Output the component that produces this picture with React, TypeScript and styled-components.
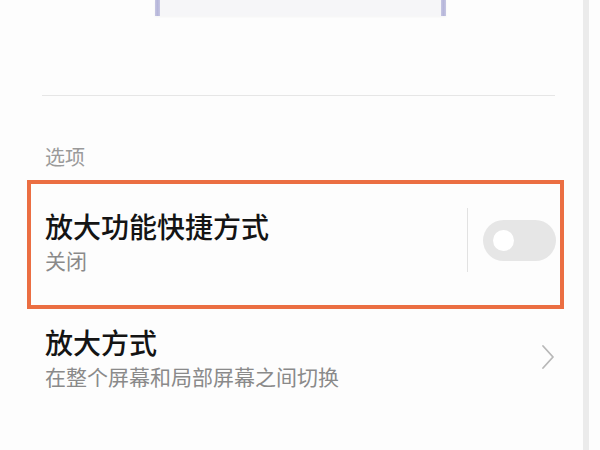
import React from 'react';
import styled, { createGlobalStyle } from 'styled-components';

const GlobalStyle = createGlobalStyle`
  html, body {
    margin: 0;
    padding: 0;
    background: #fdfdfd;
    font-family: "Noto Sans CJK SC", "Noto Sans", sans-serif;
  }
`;

const Screen = styled.div`
  width: 600px;
  height: 450px;
  display: flex;
  overflow: hidden;
  background: #fdfdfd;
`;

const Content = styled.div`
  width: 583px;
  display: flex;
  flex-direction: column;
`;

const ScrollTrack = styled.div`
  width: 6px;
  height: 100%;
  background: #ebebeb;
`;

const Preview = styled.div`
  margin-left: 155px;
  width: 291px;
  height: 16px;
  display: flex;
  background: #f6f6f8;
  box-shadow: 0 1px 2px rgba(0, 0, 0, 0.04);
`;

const PreviewEdge = styled.div`
  width: 5px;
  height: 100%;
  background: linear-gradient(90deg, #c6c6e2, #b6b6da, #c6c6e2);
`;

const PreviewFill = styled.div`
  flex: 1;
`;

const Divider = styled.div`
  margin: 79px 0 0 42px;
  width: 513px;
  height: 1px;
  background: #e6e6e6;
`;

const SectionLabel = styled.div`
  margin: 51px 0 0 45px;
  font-size: 20px;
  line-height: 20px;
  color: #9a9a9a;
`;

const Row = styled.div<{ $highlight?: boolean }>`
  display: flex;
  align-items: flex-start;
  box-sizing: border-box;
  margin-left: 27px;
  width: 537px;
  border: 4px solid ${(p) => (p.$highlight ? '#eb6e42' : 'transparent')};
  padding: ${(p) => (p.$highlight ? '28px 4px 0 14px' : '15px 0 0 14px')};
  height: ${(p) => (p.$highlight ? '129px' : '110px')};
`;

const FirstRow = styled(Row)`
  margin-top: 13px;
`;

const TextBlock = styled.div`
  flex: 1;
  display: flex;
  flex-direction: column;
`;

const Title = styled.div`
  font-size: 28px;
  line-height: 28px;
  font-weight: 500;
  color: #141414;
`;

const Subtitle = styled.div`
  margin-top: 9px;
  font-size: 21px;
  line-height: 22px;
  color: #8a8a8a;
`;

const SwitchArea = styled.div`
  margin-top: -4px;
  display: flex;
  align-items: center;
  height: 64px;
`;

const SwitchDivider = styled.div`
  width: 1px;
  height: 64px;
  background: #e2e2e2;
  margin-right: 15px;
`;

const Toggle = styled.div`
  position: relative;
  width: 73px;
  height: 41px;
  border-radius: 21px;
  background: #e6e6e6;
`;

const Knob = styled.div`
  position: absolute;
  left: 10px;
  top: 10px;
  width: 21px;
  height: 21px;
  border-radius: 50%;
  background: #ffffff;
`;

const Chevron = styled.svg`
  margin: 16px 5px 0 0;
  width: 14px;
  height: 26px;
`;

export default function App() {
  return (
    <>
      <GlobalStyle />
      <Screen>
        <Content>
          <Preview>
            <PreviewEdge />
            <PreviewFill />
            <PreviewEdge />
          </Preview>
          <Divider />
          <SectionLabel>选项</SectionLabel>
          <FirstRow $highlight>
            <TextBlock>
              <Title>放大功能快捷方式</Title>
              <Subtitle>关闭</Subtitle>
            </TextBlock>
            <SwitchArea>
              <SwitchDivider />
              <Toggle>
                <Knob />
              </Toggle>
            </SwitchArea>
          </FirstRow>
          <Row>
            <TextBlock>
              <Title>放大方式</Title>
              <Subtitle>在整个屏幕和局部屏幕之间切换</Subtitle>
            </TextBlock>
            <Chevron viewBox="0 0 14 26" fill="none">
              <path d="M2 2 L12 13 L2 24" stroke="#b8b8b8" strokeWidth="1.8" strokeLinecap="round" strokeLinejoin="round" />
            </Chevron>
          </Row>
        </Content>
        <ScrollTrack />
      </Screen>
    </>
  );
}
